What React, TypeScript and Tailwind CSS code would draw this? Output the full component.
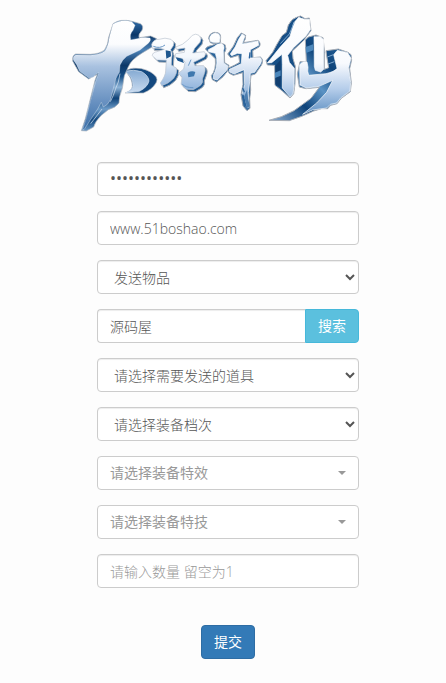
import { useState } from "react";

const fieldDesign =
  "block w-full h-[34px] rounded border border-[#ccc] bg-white text-[#555] shadow-[inset_0_1px_1px_rgba(0,0,0,0.075)] outline-none focus:border-[#66afe9]";

const inputDesign = "px-3 text-sm placeholder:text-[#999]";

const selectDesign = "pl-3 text-sm";

const pickerDesign =
  "flex w-full h-[34px] items-center justify-between rounded border border-[#ccc] bg-white px-3 text-sm font-normal text-[#999]";

const Caret = () => (
  <span className="border-x-4 border-t-4 border-x-transparent border-t-[#999]" />
);

const huaLeft =
  "M20 58 Q26 42 42 43 Q60 36 78 43 Q90 50 85 62 L77 74 Q84 86 80 100 L79 120 L95 130 Q97 146 86 160 Q70 177 50 182 L46 174 Q62 152 62 138 L64 106 L35 105 L22 92 Q22 82 36 80 L58 73 Q40 68 22 70 Z";
const huaRight =
  "M92 66 L112 58 Q130 46 142 31 Q152 24 162 31 Q172 40 165 52 L149 70 L143 84 L178 80 Q185 86 178 96 L160 105 L146 112 L150 122 L176 122 Q184 130 178 146 L172 162 Q176 174 164 183 L145 194 L124 193 L108 178 L111 157 L100 145 L116 132 L120 112 L112 101 L90 96 L92 86 L118 82 L120 69 L95 73 Z";

const Logo = () => (
  <svg
    viewBox="30 15 855 375"
    className="block h-[125px] w-[285px]"
    role="img"
    aria-label="大话许仙"
  >
    <defs>
      <linearGradient id="da" gradientUnits="userSpaceOnUse" x1="0" y1="45" x2="0" y2="375">
        <stop offset="0" stopColor="#ffffff" />
        <stop offset="0.22" stopColor="#fbfcfe" />
        <stop offset="0.42" stopColor="#a9c2e0" />
        <stop offset="0.75" stopColor="#6790c0" />
        <stop offset="1" stopColor="#3c6fa8" />
      </linearGradient>
      <linearGradient id="foot" x1="0" y1="0" x2="0" y2="1">
        <stop offset="0" stopColor="#86abd3" />
        <stop offset="1" stopColor="#c9dbf0" />
      </linearGradient>
      <linearGradient id="hua" gradientUnits="userSpaceOnUse" x1="0" y1="30" x2="0" y2="195">
        <stop offset="0" stopColor="#ffffff" />
        <stop offset="0.4" stopColor="#f3f7fc" />
        <stop offset="0.75" stopColor="#b3cbe8" />
        <stop offset="1" stopColor="#8fb3dc" />
      </linearGradient>
      <linearGradient id="face" gradientUnits="userSpaceOnUse" x1="0" y1="85" x2="0" y2="310">
        <stop offset="0" stopColor="#ffffff" />
        <stop offset="0.3" stopColor="#f5f8fd" />
        <stop offset="0.65" stopColor="#b9cfea" />
        <stop offset="1" stopColor="#5f91c4" />
      </linearGradient>
      <linearGradient id="xian" gradientUnits="userSpaceOnUse" x1="0" y1="35" x2="0" y2="345">
        <stop offset="0" stopColor="#ffffff" />
        <stop offset="0.45" stopColor="#f8fafe" />
        <stop offset="0.7" stopColor="#b5cdea" />
        <stop offset="0.9" stopColor="#709cca" />
        <stop offset="1" stopColor="#3f73a9" />
      </linearGradient>
      <linearGradient id="side" gradientUnits="userSpaceOnUse" x1="0" y1="50" x2="0" y2="378">
        <stop offset="0" stopColor="#2f6ba5" />
        <stop offset="0.12" stopColor="#0b3768" />
        <stop offset="0.26" stopColor="#4d82b6" />
        <stop offset="0.4" stopColor="#0b3768" />
        <stop offset="0.5" stopColor="#174f86" />
        <stop offset="0.6" stopColor="#8fb5d8" />
        <stop offset="0.7" stopColor="#0f4277" />
        <stop offset="0.8" stopColor="#6d9cc9" />
        <stop offset="0.9" stopColor="#14497f" />
        <stop offset="1" stopColor="#6b9bc9" />
      </linearGradient>
      <linearGradient id="tail" x1="0" y1="1" x2="1" y2="0">
        <stop offset="0" stopColor="#8fb0d3" />
        <stop offset="0.3" stopColor="#0d437a" />
        <stop offset="0.5" stopColor="#5b93c4" />
        <stop offset="0.68" stopColor="#0d437a" />
        <stop offset="1" stopColor="#3674ad" />
      </linearGradient>
    </defs>

    {/* 大 */}
    <path
      fill="#14497f"
      stroke="#b4b8bf"
      strokeWidth="2"
      d="M193 197 Q220 185 245 191 Q275 198 288 215 Q294 224 288 234 Q276 254 250 264 L196 264 Q216 256 217 244 Q217 216 193 197 Z"
    />
    <path
      fill="url(#foot)"
      stroke="#d5e2f1"
      strokeWidth="2"
      d="M195 199 Q220 192 245 200 Q266 212 267 228 Q263 246 238 259 L198 263 Q218 254 219 242 Q219 215 195 199 Z"
    />
    <path
      fill="url(#side)"
      stroke="#aeb3bb"
      strokeWidth="2"
      strokeLinejoin="round"
      d="M159 56 Q182 40 216 49 L241 56 Q252 62 246 76 Q234 88 237 98 L272 93 L290 101 Q291 112 280 124 L248 143 Q214 163 205 185 L193 212 L187 250 Q176 278 177 294 Q166 309 145 314 L124 331 Q105 350 101 366 L79 378 L64 377 L76 341 L105 226 L112 208 L86 222 L56 200 L38 168 Q36 151 47 147 L91 148 Q118 147 133 136 Q144 120 146 97 Z"
    />
    <path
      fill="url(#da)"
      stroke="#ffffff"
      strokeWidth="1"
      strokeLinejoin="round"
      d="M159 58 Q182 42 215 50 L225 61 L219 76 Q208 87 212 105 L232 101 Q253 95 270 99 Q274 106 265 115 L240 135 L200 154 Q185 166 180 180 L178 202 Q165 220 163 239 L151 285 Q144 300 130 306 L124 292 Q114 312 99 333 L72 374 L68 373 L78 341 L91 288 L108 226 L116 203 Q105 207 100 217 L86 218 L59 199 L50 179 L40 164 Q39 153 47 150 L91 151 Q119 149 135 138 Q146 120 148 97 Z"
    />
    <path fill="none" stroke="#dfeaf6" strokeWidth="2" d="M126 312 L92 356 M180 206 Q176 235 168 248 Q160 274 151 290" />

    {/* 话 */}
    <g transform="translate(255 60)" strokeLinejoin="round">
      <g transform="translate(6 6)" fill="#1d578f" stroke="#a7adb6" strokeWidth="3">
        <path d={huaLeft} />
        <path d={huaRight} />
      </g>
      <g fill="url(#hua)" stroke="#b9c3cf" strokeWidth="2">
        <path d={huaLeft} />
        <path d={huaRight} />
      </g>
      <path fill="#1d578f" d="M62 76 L77 79 L78 94 L64 101 Z M92 97 L112 102 L117 114 L98 107 Z" />
      <path fill="#3f78ae" d="M128 143 Q140 136 151 141 L147 154 L130 157 Z" />
      <path fill="none" stroke="#6a98c6" strokeWidth="3" d="M138 104 L130 122 M112 178 Q122 188 145 188 M25 64 Q45 72 60 60" />
    </g>

    {/* 许 */}
    <g transform="translate(420 0)">
      <g fill="#2b659c" stroke="#9fa7b2" strokeWidth="3" strokeLinejoin="round">
        <path d="M26 100 Q28 84 44 82 Q62 82 62 96 L61 111 Q46 119 31 113 Z" />
        <path d="M16 132 Q21 123 37 121 L57 112 L75 119 Q82 132 73 144 L74 173 L87 181 L84 196 Q71 217 50 231 L37 224 L34 212 Q49 195 46 161 Z" />
        <path d="M83 147 Q103 124 112 98 L124 84 L137 91 Q138 103 130 113 L174 106 Q185 116 177 126 L158 137 L159 158 L181 156 Q193 164 184 181 L166 207 L153 211 L151 230 Q154 255 149 281 L150 310 L141 317 L129 303 L123 269 L129 238 L128 203 L100 211 L88 205 L81 191 L103 181 L119 172 L116 151 L92 158 Z" />
      </g>
      <g fill="url(#face)" stroke="#ffffff" strokeWidth="2" strokeLinejoin="round">
        <path d="M29 99 Q32 86 46 84 Q60 85 60 98 L58 111 Q42 115 31 109 Z" />
        <path d="M25 134 L42 125 Q53 114 66 116 Q76 123 70 137 L71 174 L84 183 L80 196 L52 225 L41 222 L40 211 Q53 189 50 160 L46 145 L26 140 Z" />
        <path d="M91 147 Q108 126 116 103 L126 87 L135 93 L126 117 L174 108 L176 121 L151 134 L150 159 L181 158 Q188 164 182 176 L164 202 L151 205 L149 230 L145 263 L146 308 L138 308 L135 282 L127 265 L134 238 L132 194 L102 207 L89 201 L88 193 L124 176 L126 146 L112 145 L95 152 Z" />
      </g>
      <path fill="none" stroke="#2a629a" strokeWidth="4" d="M133 262 L128 248 M129 269 L139 309 M150 142 L148 160" />
      <path fill="#4c7eaf" d="M141 255 L132 276 L143 311 L149 302 L144 280 Z" />
    </g>

    {/* 仙 */}
    <g transform="translate(420 0)">
      <g stroke="#a7adb6" strokeWidth="3" strokeLinejoin="round">
        <path
          fill="#174f86"
          d="M265 60 Q276 39 292 36 L302 33 L315 41 L328 39 L330 54 L333 77 L310 107 L277 138 L279 161 L286 184 L285 236 L281 266 L270 279 L247 258 L225 241 L224 181 L202 180 L198 167 L218 142 L230 119 L246 92 L259 82 Z"
        />
        <path
          fill="url(#tail)"
          d="M316 105 L325 96 L348 90 L369 98 L374 143 L373 193 L386 188 L380 153 L378 137 L415 132 L444 142 L453 149 L455 165 L449 191 L454 233 L451 260 L424 280 L411 296 L392 301 L383 311 L365 311 L341 318 L305 334 L268 347 L207 346 L244 335 L282 317 L333 280 L358 247 L318 251 L298 246 L292 207 L300 170 L319 170 Z"
        />
      </g>
      <g fill="url(#xian)" stroke="#ffffff" strokeWidth="2" strokeLinejoin="round">
        <path d="M281 54 L296 37 L314 43 L328 43 L331 74 L318 93 L280 129 L263 151 L268 172 L283 190 L282 245 L279 266 L270 276 L247 249 L247 179 L246 148 L215 173 L202 174 L240 127 L270 94 Z" />
        <path d="M342 95 L361 95 L371 104 L371 193 L362 201 L346 196 L343 184 Z" />
        <path d="M299 181 Q305 167 321 171 L324 187 Q321 198 326 211 L378 206 Q404 200 411 190 L401 149 L412 136 L443 143 L453 160 L446 188 L452 232 L450 258 L422 279 L410 294 L391 298 L380 309 L337 315 L308 328 L350 294 L380 262 L398 226 L357 244 L319 249 L300 240 Z" />
      </g>
      <path fill="#123f70" d="M226 183 L242 164 L242 246 L226 238 Z" />
      <path fill="#4c87bb" d="M225 203 L242 196 L242 212 L225 219 Z M317 126 L339 118 L340 136 L318 144 Z" />
      <path fill="none" stroke="#7fa8cf" strokeWidth="3" d="M283 52 L268 87 L241 116 M382 156 L400 149 M384 177 L403 170" />
    </g>
  </svg>
);

const App = () => {
  const [password, setPassword] = useState("123456789012");
  const [account, setAccount] = useState("www.51boshao.com");
  const [keyword, setKeyword] = useState("源码屋");

  return (
    <main className="min-h-screen bg-[#fdfdfd] pt-[10px] pb-6 font-['Open_Sans','Noto_Sans_CJK_SC',sans-serif] font-light">
      <h1 className="ml-[70px]">
        <Logo />
      </h1>
      <form
        className="mt-[27px] flex flex-col gap-[15px] pr-[87px] pl-[97px]"
        onSubmit={(e) => e.preventDefault()}
      >
        <input
          type="password"
          aria-label="密码"
          className={`${fieldDesign} px-3 pb-[3px] text-base font-medium`}
          value={password}
          onChange={(e) => setPassword(e.target.value)}
        />
        <input
          type="text"
          aria-label="账号"
          className={`${fieldDesign} ${inputDesign}`}
          value={account}
          onChange={(e) => setAccount(e.target.value)}
        />
        <select aria-label="类型" className={`${fieldDesign} ${selectDesign}`}>
          <option>发送物品</option>
        </select>
        {/* 搜索 */}
        <div className="flex">
          <input
            type="text"
            aria-label="关键字"
            className={`${fieldDesign} ${inputDesign} min-w-0 flex-1 rounded-r-none border-r-0`}
            value={keyword}
            onChange={(e) => setKeyword(e.target.value)}
          />
          <button
            type="button"
            className="h-[34px] shrink-0 rounded-r border border-[#46b8da] bg-[#5bc0de] px-3 text-sm font-normal text-white"
          >
            搜索
          </button>
        </div>
        <select aria-label="道具" className={`${fieldDesign} ${selectDesign}`}>
          <option>请选择需要发送的道具</option>
        </select>
        <select aria-label="装备档次" className={`${fieldDesign} ${selectDesign}`}>
          <option>请选择装备档次</option>
        </select>
        <button type="button" className={pickerDesign}>
          请选择装备特效
          <Caret />
        </button>
        <button type="button" className={pickerDesign}>
          请选择装备特技
          <Caret />
        </button>
        <input
          type="text"
          aria-label="数量"
          className={`${fieldDesign} ${inputDesign}`}
          placeholder="请输入数量 留空为1"
        />
        <button
          type="submit"
          className="mt-[22px] h-[34px] self-center rounded border border-[#2e6da4] bg-[#337ab7] px-3 text-sm font-normal text-white"
        >
          提交
        </button>
      </form>
    </main>
  );
};

export default App;
